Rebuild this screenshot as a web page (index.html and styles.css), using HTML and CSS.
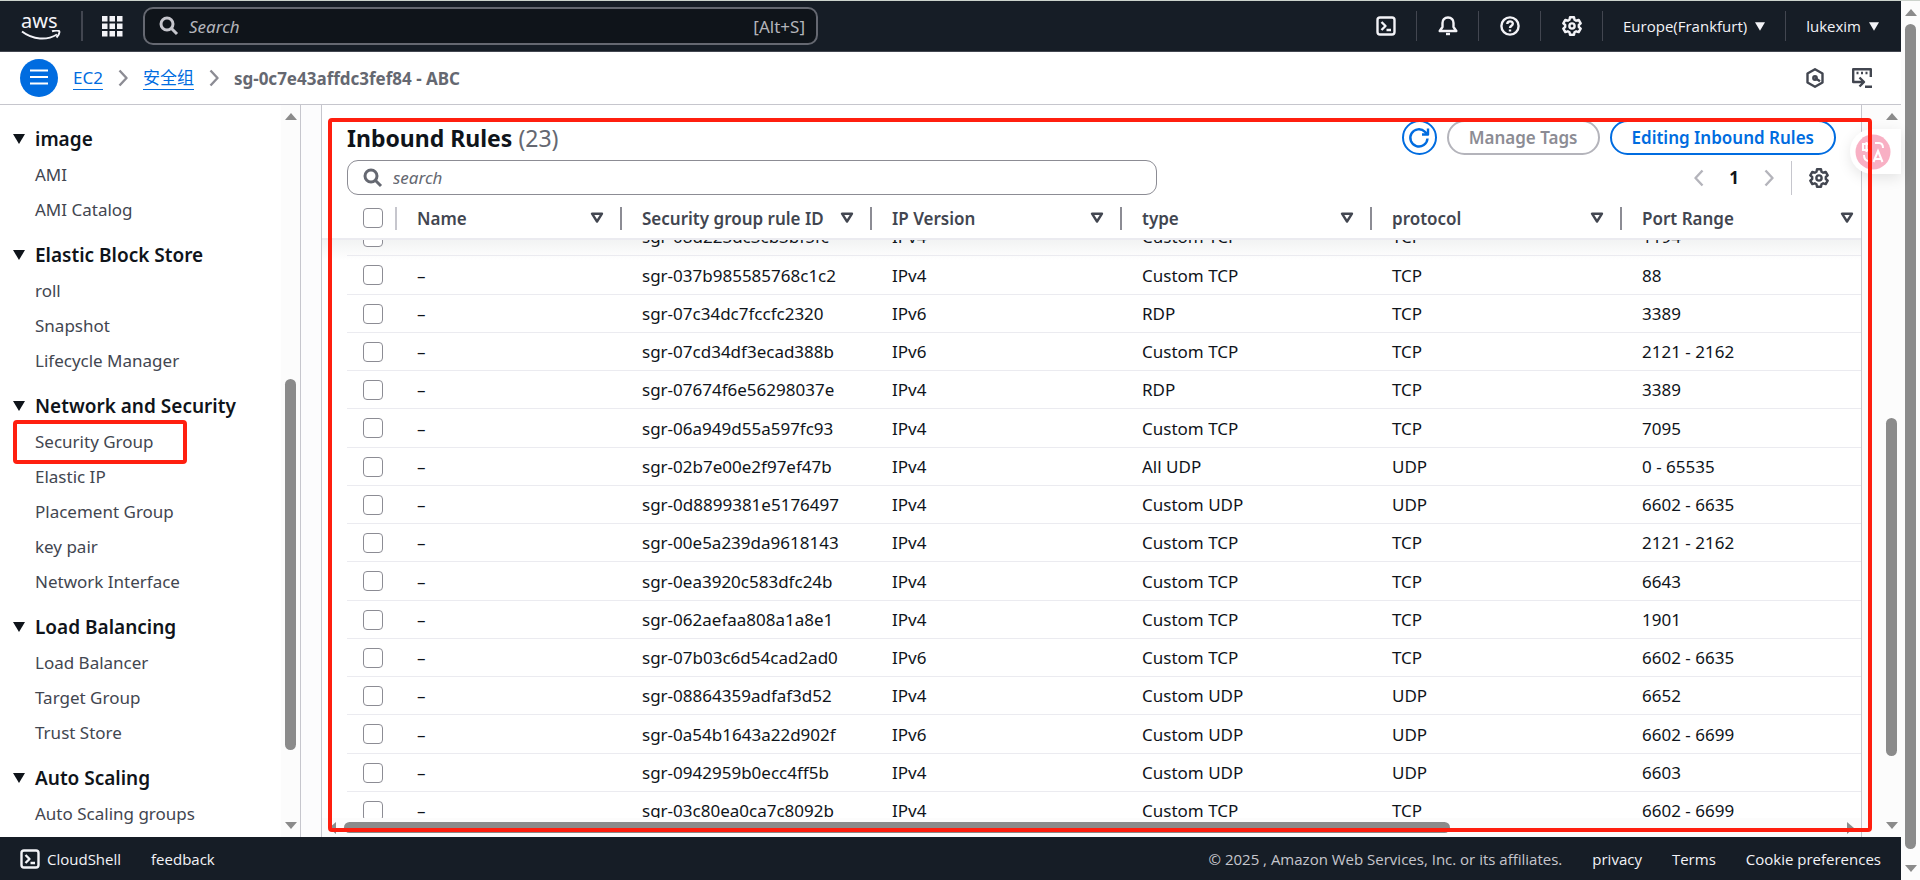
FILE: index.html
```
<!DOCTYPE html>
<html lang="en">
<head>
  <meta charset="UTF-8">
  <meta name="viewport" content="width=device-width, initial-scale=1.0">
  <title>Security Group - EC2</title>
  <link rel="stylesheet" href="styles.css">
</head>
<body>
  <svg width="0" height="0" class="sprite" aria-hidden="true">
    <symbol id="i-search" viewBox="0 0 20 20"><circle cx="8" cy="8" r="6" /><path d="M12.5 12.5L18 18" /></symbol>
    <symbol id="i-shell" viewBox="0 0 20 20"><rect x="1.5" y="1.5" width="17" height="17" rx="2.5" /><path d="M5.5 6l4 4-4 4M10.500 14h4.500" /></symbol>
    <symbol id="i-gear" viewBox="0 0 20 20"><path d="M8 1.200h4l.5 2.500 1.700 1 2.500-.8 2 3.400-1.900 1.700v2l1.900 1.700-2 3.400-2.500-.8-1.700 1-.5 2.500H8l-.5-2.500-1.700-1-2.500.8-2-3.400L3.200 11V9L1.300 7.300l2-3.400 2.500.8 1.700-1z" /><circle cx="10" cy="10" r="2.600" /></symbol>
    <symbol id="i-down" viewBox="0 0 12 10"><path d="M0 0h12L6 10z" /></symbol>
    <symbol id="i-filter" viewBox="0 0 14 12"><path d="M2 1.700h10L7 9.500z" /></symbol>
    <symbol id="i-right" viewBox="0 0 10 18"><path d="M1.500 1.500L8.500 9l-7 7.500" /></symbol>
    <symbol id="i-left" viewBox="0 0 10 18"><path d="M8.500 1.500L1.500 9l7 7.500" /></symbol>
  </svg>

  <div class="app">
    <header class="topbar">
      <a href="#" class="logo" aria-label="aws">
        <span>aws</span>
        <svg width="40" height="11" viewBox="0 0 40 11"><path d="M1 1.500c11 8.500 25 9 35 3" /><path d="M31 1.300c3-1 6.500-1 7.200 0 .5 1-.7 4-2.700 6.200" /></svg>
      </a>
      <button class="apps" aria-label="Services">
        <svg width="21" height="21" viewBox="0 0 21 21"><path d="M0 0h5.500v5.500H0zM7.500 0H13v5.500H7.500zM15 0h5.500v5.500H15zM0 7.500h5.500V13H0zM7.500 7.500H13V13H7.500zM15 7.500h5.500V13H15zM0 15h5.500v5.500H0zM7.500 15H13v5.500H7.500zM15 15h5.500v5.500H15z" /></svg>
      </button>
      <label class="global-search">
        <svg class="line" width="20" height="20"><use href="#i-search" /></svg>
        <input type="text" placeholder="Search" aria-label="Search">
        <span>[Alt+S]</span>
      </label>
      <nav class="tools">
        <button class="tool" aria-label="CloudShell"><svg class="line" width="20" height="20"><use href="#i-shell" /></svg></button>
        <button class="tool" aria-label="Notifications"><svg class="line" width="20" height="20" viewBox="0 0 20 20"><path d="M10 1.500c-3.600 0-5.500 2.500-5.500 5.500v4l-2.800 4h16.600l-2.800-4V7c0-3-1.900-5.500-5.500-5.500z" /><path d="M8 18h4" /></svg></button>
        <button class="tool" aria-label="Help"><svg class="line" width="20" height="20" viewBox="0 0 20 20"><circle cx="10" cy="10" r="8.600" /><path d="M7.300 8c0-3.500 5.500-3.500 5.500-.3 0 2-2.800 2-2.800 4.300M10 13.500v2" /></svg></button>
        <button class="tool" aria-label="Settings"><svg class="line" width="20" height="20"><use href="#i-gear" /></svg></button>
        <button class="menu region">Europe(Frankfurt) <svg width="10" height="9"><use href="#i-down" /></svg></button>
        <button class="menu">lukexim <svg width="10" height="9"><use href="#i-down" /></svg></button>
      </nav>
    </header>

    <div class="crumbs">
      <button class="burger" aria-label="Navigation"><svg width="18" height="16" viewBox="0 0 18 16"><path d="M0 1.500h18M0 8h18M0 14.500h18" /></svg></button>
      <a href="#">EC2</a>
      <svg class="line" width="10" height="18"><use href="#i-right" /></svg>
      <a href="#">安全组</a>
      <svg class="line" width="10" height="18"><use href="#i-right" /></svg>
      <span class="current">sg-0c7e43affdc3fef84 - ABC</span>
      <div class="crumb-tools">
        <button aria-label="Assistant"><svg class="line" width="20" height="20" viewBox="0 0 20 20"><path d="M10 1.200l7.500 4.300v9L10 18.800l-7.500-4.300v-9z" /><circle cx="10" cy="10" r="1.700" /><path d="M10 10l5 3.200" /></svg></button>
        <button aria-label="Tutorials"><svg class="line" width="20" height="20" viewBox="0 0 20 20"><path d="M18.800 9V1.200H1.200V14H5M4.500 5h2M9 5h2M13.500 5h2M5 14h6M7.500 9.500l4.500 4.500-4.500 4.500M13 18.800h7" /></svg></button>
      </div>
    </div>

    <div class="body">
      <nav class="sidebar">
        <h3><svg width="12" height="10"><use href="#i-down" /></svg>image</h3>
        <ul>
          <li><a href="#">AMI</a></li>
          <li><a href="#">AMI Catalog</a></li>
        </ul>
        <h3><svg width="12" height="10"><use href="#i-down" /></svg>Elastic Block Store</h3>
        <ul>
          <li><a href="#">roll</a></li>
          <li><a href="#">Snapshot</a></li>
          <li><a href="#">Lifecycle Manager</a></li>
        </ul>
        <h3><svg width="12" height="10"><use href="#i-down" /></svg>Network and Security</h3>
        <ul>
          <li class="marked"><a href="#">Security Group</a></li>
          <li><a href="#">Elastic IP</a></li>
          <li><a href="#">Placement Group</a></li>
          <li><a href="#">key pair</a></li>
          <li><a href="#">Network Interface</a></li>
        </ul>
        <h3><svg width="12" height="10"><use href="#i-down" /></svg>Load Balancing</h3>
        <ul>
          <li><a href="#">Load Balancer</a></li>
          <li><a href="#">Target Group</a></li>
          <li><a href="#">Trust Store</a></li>
        </ul>
        <h3><svg width="12" height="10"><use href="#i-down" /></svg>Auto Scaling</h3>
        <ul>
          <li><a href="#">Auto Scaling groups</a></li>
        </ul>
      </nav>
      <div class="scroll side-scroll"><i class="up"></i><div class="track"><b></b></div><i class="dn"></i></div>

      <main class="panel">
        <div class="panel-head">
          <h2>Inbound Rules <span>(23)</span></h2>
          <button class="btn round" aria-label="Refresh"><svg class="line" width="22" height="22" viewBox="0 0 22 22"><path d="M19.500 11.500A8.600 8.600 0 1 1 17 4.800l2 2" /><path d="M20 1.500v6h-6" /></svg></button>
          <button class="btn" disabled>Manage Tags</button>
          <button class="btn">Editing Inbound Rules</button>
        </div>
        <div class="filters">
          <label class="search">
            <svg class="line" width="20" height="20"><use href="#i-search" /></svg>
            <input type="text" placeholder="search" aria-label="Filter rules">
          </label>
          <div class="pager">
            <button aria-label="Previous"><svg class="line" width="10" height="18"><use href="#i-left" /></svg></button>
            <strong>1</strong>
            <button aria-label="Next"><svg class="line" width="10" height="18"><use href="#i-right" /></svg></button>
            <button class="prefs" aria-label="Preferences"><svg class="line" width="20" height="20"><use href="#i-gear" /></svg></button>
          </div>
        </div>
        <div class="rules-view">
          <table class="rules">
            <colgroup><col class="c-check"><col class="c-name"><col><col><col><col><col></colgroup>
            <thead>
              <tr>
                <th><input type="checkbox" aria-label="Select all"></th>
                <th><div>Name <svg class="line" width="14" height="12"><use href="#i-filter" /></svg></div></th>
                <th><div>Security group rule ID <svg class="line" width="14" height="12"><use href="#i-filter" /></svg></div></th>
                <th><div>IP Version <svg class="line" width="14" height="12"><use href="#i-filter" /></svg></div></th>
                <th><div>type <svg class="line" width="14" height="12"><use href="#i-filter" /></svg></div></th>
                <th><div>protocol <svg class="line" width="14" height="12"><use href="#i-filter" /></svg></div></th>
                <th><div>Port Range <svg class="line" width="14" height="12"><use href="#i-filter" /></svg></div></th>
              </tr>
            </thead>
          </table>
          <div class="rows">
            <table class="rules">
              <colgroup><col class="c-check"><col class="c-name"><col><col><col><col><col></colgroup>
              <tbody>
                <tr><td><input type="checkbox" aria-label="Select"></td><td>–</td><td>sgr-08d223dc3cb3bf5fc</td><td>IPv4</td><td>Custom TCP</td><td>TCP</td><td>1194</td></tr>
                <tr><td><input type="checkbox" aria-label="Select"></td><td>–</td><td>sgr-037b985585768c1c2</td><td>IPv4</td><td>Custom TCP</td><td>TCP</td><td>88</td></tr>
                <tr><td><input type="checkbox" aria-label="Select"></td><td>–</td><td>sgr-07c34dc7fccfc2320</td><td>IPv6</td><td>RDP</td><td>TCP</td><td>3389</td></tr>
                <tr><td><input type="checkbox" aria-label="Select"></td><td>–</td><td>sgr-07cd34df3ecad388b</td><td>IPv6</td><td>Custom TCP</td><td>TCP</td><td>2121 - 2162</td></tr>
                <tr><td><input type="checkbox" aria-label="Select"></td><td>–</td><td>sgr-07674f6e56298037e</td><td>IPv4</td><td>RDP</td><td>TCP</td><td>3389</td></tr>
                <tr><td><input type="checkbox" aria-label="Select"></td><td>–</td><td>sgr-06a949d55a597fc93</td><td>IPv4</td><td>Custom TCP</td><td>TCP</td><td>7095</td></tr>
                <tr><td><input type="checkbox" aria-label="Select"></td><td>–</td><td>sgr-02b7e00e2f97ef47b</td><td>IPv4</td><td>All UDP</td><td>UDP</td><td>0 - 65535</td></tr>
                <tr><td><input type="checkbox" aria-label="Select"></td><td>–</td><td>sgr-0d8899381e5176497</td><td>IPv4</td><td>Custom UDP</td><td>UDP</td><td>6602 - 6635</td></tr>
                <tr><td><input type="checkbox" aria-label="Select"></td><td>–</td><td>sgr-00e5a239da9618143</td><td>IPv4</td><td>Custom TCP</td><td>TCP</td><td>2121 - 2162</td></tr>
                <tr><td><input type="checkbox" aria-label="Select"></td><td>–</td><td>sgr-0ea3920c583dfc24b</td><td>IPv4</td><td>Custom TCP</td><td>TCP</td><td>6643</td></tr>
                <tr><td><input type="checkbox" aria-label="Select"></td><td>–</td><td>sgr-062aefaa808a1a8e1</td><td>IPv4</td><td>Custom TCP</td><td>TCP</td><td>1901</td></tr>
                <tr><td><input type="checkbox" aria-label="Select"></td><td>–</td><td>sgr-07b03c6d54cad2ad0</td><td>IPv6</td><td>Custom TCP</td><td>TCP</td><td>6602 - 6635</td></tr>
                <tr><td><input type="checkbox" aria-label="Select"></td><td>–</td><td>sgr-08864359adfaf3d52</td><td>IPv4</td><td>Custom UDP</td><td>UDP</td><td>6652</td></tr>
                <tr><td><input type="checkbox" aria-label="Select"></td><td>–</td><td>sgr-0a54b1643a22d902f</td><td>IPv6</td><td>Custom UDP</td><td>UDP</td><td>6602 - 6699</td></tr>
                <tr><td><input type="checkbox" aria-label="Select"></td><td>–</td><td>sgr-0942959b0ecc4ff5b</td><td>IPv4</td><td>Custom UDP</td><td>UDP</td><td>6603</td></tr>
                <tr><td><input type="checkbox" aria-label="Select"></td><td>–</td><td>sgr-03c80ea0ca7c8092b</td><td>IPv4</td><td>Custom TCP</td><td>TCP</td><td>6602 - 6699</td></tr>
              </tbody>
            </table>
          </div>
        </div>
        <div class="hscroll"><i class="lt"></i><div class="htrack"><b></b></div><i class="rt"></i></div>
      </main>
      <div class="scroll main-scroll"><i class="up"></i><div class="track"><b></b></div><i class="dn"></i></div>

      <button class="translate" aria-label="Translate"><svg width="36" height="36" viewBox="0 0 36 36"><circle cx="18" cy="18" r="17.500" /><path d="M8 10h7v6H8zM11.500 8v10M20 9h4q4 0 4 5M9 21q0 6 5 6" /><path d="M18.500 28L23 17l4.500 11M20 25h6" /></svg></button>
      <div class="highlight"></div>
    </div>

    <footer class="footer">
      <button><svg class="line" width="20" height="20"><use href="#i-shell" /></svg>CloudShell</button>
      <a href="#">feedback</a>
      <span class="copy">© 2025 , Amazon Web Services, Inc. or its affiliates.</span>
      <a href="#">privacy</a>
      <a href="#">Terms</a>
      <a href="#">Cookie preferences</a>
    </footer>
  </div>
  <div class="scroll page-scroll"><i class="up"></i><div class="track"><b></b></div><i class="dn"></i></div>
</body>
</html>
```
FILE: styles.css
```
* {
  margin: 0;
  padding: 0;
  box-sizing: border-box;
}

body {
  display: flex;
  height: 100vh;
  overflow: hidden;
  border-top: 1px solid #ccd3cc;
  background: #fff;
  color: #0f141a;
  font-family: "Noto Sans", "Noto Sans CJK SC", sans-serif;
  font-size: 17px;
}

button {
  border: none;
  background: none;
  color: inherit;
  font: inherit;
  cursor: pointer;
}

input {
  font: inherit;
}

a {
  color: inherit;
  text-decoration: none;
}

svg {
  flex: none;
  fill: currentColor;
}

svg.line {
  fill: none;
  stroke: currentColor;
  stroke-width: 2.4;
  stroke-linejoin: round;
}

.sprite {
  position: absolute;
}

.app {
  flex: 1;
  min-width: 0;
  display: flex;
  flex-direction: column;
}

/* Top bar */
.topbar {
  height: 51px;
  display: flex;
  align-items: center;
  background: #161d26;
  border-bottom: 1px solid #424650;
  color: #f3f3f7;
}

.logo {
  width: 83px;
  height: 30px;
  padding-left: 21px;
  border-right: 2px solid #424650;
  display: flex;
  flex-direction: column;
  justify-content: center;
  font-size: 20px;
  line-height: 18px;
}

.logo svg {
  fill: none;
  stroke: currentColor;
  stroke-width: 2;
}

.apps {
  height: 21px;
  margin-left: 19px;
}

.apps svg {
  display: block;
}

.global-search {
  width: 675px;
  height: 38px;
  margin-left: 20px;
  padding: 0 11px 0 14px;
  display: flex;
  align-items: center;
  gap: 10px;
  border: 2px solid #656871;
  border-radius: 10px;
  background: #0f141a;
  color: #b4b4bb;
}

.global-search svg {
  color: #c6c6cd;
}

.global-search input,
.search input {
  flex: 1;
  min-width: 0;
  border: none;
  outline: none;
  background: none;
  color: inherit;
}

.global-search input::placeholder,
.search input::placeholder {
  color: inherit;
  font-style: italic;
}

.tools {
  margin-left: auto;
  padding-right: 2px;
  display: flex;
  align-items: center;
  font-family: "Open Sans", sans-serif;
  font-size: 15px;
}

.tool {
  width: 62px;
  height: 30px;
  display: flex;
  align-items: center;
  justify-content: center;
  border-right: 1px solid #424650;
}

.menu {
  height: 30px;
  padding: 0 20px;
  display: flex;
  align-items: center;
  gap: 8px;
}

.region {
  border-right: 1px solid #424650;
}

/* Breadcrumbs */
.crumbs {
  height: 53px;
  padding: 0 29px 0 20px;
  display: flex;
  align-items: center;
  border-bottom: 1px solid #c6c6cd;
  gap: 15px;
  color: #8c8c94;
}

.crumbs a {
  color: #006ce0;
  line-height: 22px;
  border-bottom: 1px solid #006ce0;
}

.burger {
  width: 38px;
  height: 38px;
  border-radius: 50%;
  background: #006ce0;
}

.burger svg {
  stroke: #fff;
  stroke-width: 2;
}

.current {
  color: #656871;
  font-weight: 700;
}

.crumb-tools {
  margin-left: auto;
  display: flex;
  gap: 27px;
  color: #424650;
}

.crumb-tools svg {
  display: block;
}

.body {
  flex: 1;
  min-height: 0;
  display: flex;
  position: relative;
}

/* Sidebar */
.sidebar {
  width: 281px;
  padding: 16px 0 0 13px;
  overflow: hidden;
}

.sidebar h3 {
  height: 36px;
  display: flex;
  align-items: center;
  gap: 10px;
  font-size: 19px;
  font-weight: 600;
}

.sidebar ul {
  margin-bottom: 10px;
  padding-left: 22px;
  list-style: none;
}

.sidebar li {
  height: 35px;
  line-height: 35px;
  color: #424650;
}

.marked {
  position: relative;
}

.marked::after {
  content: '';
  position: absolute;
  left: -22px;
  top: -4px;
  width: 166px;
  height: 36px;
  border: 4px solid #ff1f0f;
  border-radius: 4px;
}

/* Scrollbars */
.scroll {
  width: 19px;
  padding: 8px 0;
  display: flex;
  flex-direction: column;
  align-items: center;
  gap: 8px;
  background: #fcfcfc;
}

.scroll .track {
  flex: 1;
  width: 11px;
}

.scroll b {
  display: block;
  border-radius: 6px;
  background: #8b8b8b;
}

.scroll i,
.hscroll i {
  border: 6px solid transparent;
}

.scroll .up {
  border-top: none;
  border-bottom: 7px solid #8b8b8b;
}

.scroll .dn {
  border-bottom: none;
  border-top: 7px solid #8b8b8b;
}

.page-scroll b {
  height: 99%;
}

.side-scroll .track {
  padding-top: 251px;
}

.side-scroll b {
  height: 371px;
}

.main-scroll .track {
  padding-top: 290px;
}

.main-scroll b {
  height: 338px;
}

.main-scroll {
  width: 39px;
  padding-left: 20px;
}

/* Rules panel */
.panel {
  flex: 1;
  min-width: 0;
  margin-left: 21px;
  border: solid #c6c6cd;
  border-width: 0 1px;
  display: flex;
  flex-direction: column;
  box-shadow: -20px 0 #fcfcfd, -21px 0 #c6c6cd;
}

.panel-head {
  padding: 15px 25px 0;
  display: flex;
  align-items: center;
  gap: 10px;
}

.panel-head h2 {
  margin-right: auto;
  font-size: 23px;
  line-height: 30px;
  font-weight: 700;
}

.panel-head h2 span {
  color: #656871;
  font-weight: 400;
}

.btn {
  height: 35px;
  padding: 0 20px;
  border: 2px solid #006ce0;
  border-radius: 18px;
  color: #006ce0;
  font-weight: 600;
}

.btn:disabled {
  border-color: #b4b4bb;
  color: #8c8c94;
}

.round {
  width: 35px;
  padding: 0;
}

.round svg {
  display: block;
  margin: auto;
}

.filters {
  padding: 5px 25px 0;
  display: flex;
  align-items: center;
  justify-content: space-between;
}

.search {
  width: 54.4%;
  height: 35px;
  padding: 0 15px;
  display: flex;
  align-items: center;
  gap: 10px;
  border: 1px solid #8c8c94;
  border-radius: 11px;
  color: #656871;
}

.search svg,
.global-search svg {
  stroke-width: 3;
}

.pager {
  display: flex;
  align-items: center;
  gap: 25px;
}

.pager button {
  display: flex;
  align-items: center;
  color: #b4b4bb;
}

.pager .prefs {
  height: 34px;
  margin-left: -8px;
  padding: 0 7px 0 17px;
  border-left: 1px solid #c6c6cd;
  color: #424650;
}

.rules-view {
  flex: 1;
  min-height: 0;
  display: flex;
  flex-direction: column;
  overflow: hidden;
}

.rules {
  width: 1525px;
  margin-left: 25px;
  table-layout: fixed;
  border-collapse: separate;
  border-spacing: 0;
  white-space: nowrap;
}

.c-check {
  width: 50px;
}

.c-name {
  width: 225px;
}

.rules th,
.rules td {
  padding: 0 0 0 20px;
  text-align: left;
}

.rules th:first-child,
.rules td:first-child {
  padding-left: 16px;
}

.rules thead th {
  height: 43px;
  padding-top: 3px;
  color: #424650;
  font-weight: 600;
}

.rules th:first-child {
  background: linear-gradient(#c6c6cd, #c6c6cd) right 12px / 2px 23px no-repeat;
}

.rules th div {
  height: 23px;
  padding-right: 16px;
  display: flex;
  align-items: center;
  justify-content: space-between;
  border-right: 2px solid #8c8c94;
}

.rules input {
  appearance: none;
  display: block;
  width: 20px;
  height: 20px;
  border: 1px solid #8c8c94;
  border-radius: 4px;
  background: #fff;
}

.rules td {
  height: 38px;
  border-bottom: 1px solid #ebebf0;
}

.rules tr:nth-child(4n + 2) td {
  height: 39px;
}

/* the list is scrolled, so it starts and ends in the middle of a row */
.rows {
  flex: 1;
  min-height: 0;
  display: flex;
  flex-direction: column;
  justify-content: flex-end;
  overflow: hidden;
  border-top: 2px solid #ebebf0;
  background: linear-gradient(#f2f3f3, #fff 20px);
}

.rows .rules {
  margin-bottom: -12px;
}

.hscroll {
  height: 19px;
  padding: 0 7px;
  display: flex;
  align-items: center;
  gap: 8px;
  background: #fcfcfc;
}

.hscroll .lt {
  border-left: none;
  border-right: 7px solid #8b8b8b;
}

.hscroll .rt {
  border-right: none;
  border-left: 7px solid #8b8b8b;
}

.htrack {
  flex: 1;
}

.htrack b {
  display: block;
  width: 74%;
  height: 11px;
  border-radius: 6px;
  background: #8b8b8b;
}

/* Overlays */
.translate {
  position: absolute;
  top: 24px;
  right: 0;
  width: 51px;
  height: 45px;
  padding-left: 5px;
  border-radius: 22px 0 0 22px;
  background: #fff;
  box-shadow: 0 4px 14px rgba(0, 0, 0, 0.1);
  text-align: left;
}

.translate svg {
  display: block;
  fill: #f8b0c4;
}

.translate path {
  fill: none;
  stroke: #fff;
  stroke-width: 2;
}

.highlight {
  position: absolute;
  top: 13px;
  right: 29px;
  bottom: 5px;
  left: 328px;
  border: 4px solid #ff1f0f;
  border-radius: 4px;
  pointer-events: none;
}

/* Footer */
.footer {
  height: 43px;
  padding: 0 20px;
  display: flex;
  align-items: center;
  gap: 30px;
  background: #161d26;
  color: #f3f3f7;
  font-family: "Open Sans", sans-serif;
  font-size: 15px;
}

.footer button {
  display: flex;
  align-items: center;
  gap: 7px;
}

.footer .copy {
  margin-left: auto;
  color: #c6c6cd;
}
```
